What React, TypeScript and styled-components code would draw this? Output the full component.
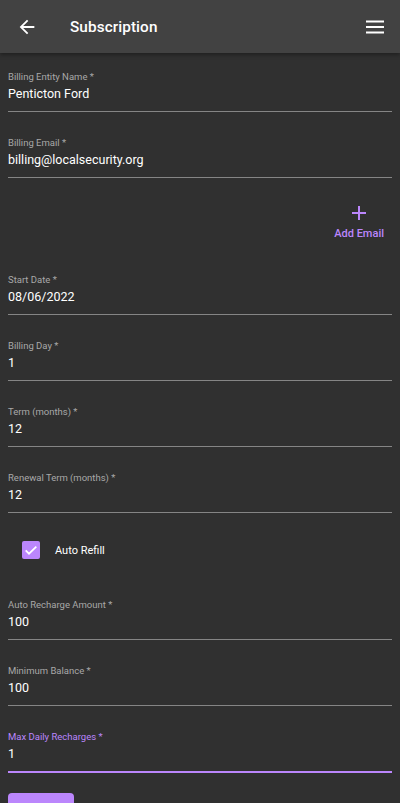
import React from "react";
import styled, { createGlobalStyle } from "styled-components";

const Global = createGlobalStyle`
  html, body { margin: 0; padding: 0; background: #303030; }
  body { font-family: Roboto, "Noto Sans", sans-serif; color: #fff; }
  * { box-sizing: border-box; }
`;

const Page = styled.div`
  width: 400px;
  min-height: 803px;
  background: #303030;
  overflow: hidden;
`;

const TopBar = styled.header`
  height: 53px;
  background: #424242;
  display: flex;
  align-items: center;
  padding: 0 14px 0 16px;
  box-shadow: 0 2px 4px rgba(0, 0, 0, 0.35);
  position: relative;
  z-index: 1;
`;

const IconBtn = styled.button`
  background: none;
  border: none;
  padding: 0;
  width: 22px;
  height: 22px;
  display: flex;
  align-items: center;
  justify-content: center;
  color: #fff;
`;

const Title = styled.h1`
  margin: 0 0 0 32px;
  flex: 1;
  font-size: 15.3px;
  font-weight: 500;
  letter-spacing: 0.1px;
  color: #fff;
`;

const Form = styled.div`
  padding: 17px 8px 0;
  display: flex;
  flex-direction: column;
`;

const Field = styled.div<{ $focused?: boolean; $first?: boolean }>`
  margin-top: ${(p) => (p.$first ? "0" : "24px")};
  padding-bottom: 8px;
  border-bottom: ${(p) => (p.$focused ? "2px solid #bb86fc" : "1px solid #858585")};
  display: flex;
  flex-direction: column;
`;

const Label = styled.label<{ $focused?: boolean }>`
  font-size: 9.5px;
  line-height: 14px;
  color: ${(p) => (p.$focused ? "#bb86fc" : "#a8a8a8")};
`;

const Value = styled.div`
  font-size: 12.5px;
  line-height: 19px;
  color: #fff;
`;

const AddRow = styled.div`
  display: flex;
  justify-content: flex-end;
  padding-top: 15px;
`;

const AddBtn = styled.button`
  background: none;
  border: none;
  padding: 8px;
  display: flex;
  flex-direction: column;
  align-items: center;
  gap: 2px;
  color: #bb86fc;
  font-family: Roboto, sans-serif;
  font-size: 11px;
  font-weight: 500;
  line-height: 14px;
`;

const CheckRow = styled.div`
  display: flex;
  align-items: center;
  height: 42px;
  margin: 16px 0 3px 5px;
`;

const CheckWrap = styled.span`
  width: 36px;
  height: 36px;
  display: flex;
  align-items: center;
  justify-content: center;
`;

const CheckBox = styled.span`
  width: 18px;
  height: 18px;
  border-radius: 2px;
  background: #bb86fc;
  display: flex;
  align-items: center;
  justify-content: center;
`;

const CheckLabel = styled.span`
  margin-left: 6px;
  font-size: 11px;
  color: #fff;
`;

const SaveBtn = styled.button`
  margin-top: 20px;
  width: 66px;
  height: 36px;
  border: none;
  border-radius: 4px;
  background: #bb86fc;
`;

const fields1 = [
  { label: "Billing Entity Name *", value: "Penticton Ford" },
  { label: "Billing Email *", value: "billing@localsecurity.org" },
];
const fields2 = [
  { label: "Start Date *", value: "08/06/2022" },
  { label: "Billing Day *", value: "1" },
  { label: "Term (months) *", value: "12" },
  { label: "Renewal Term (months) *", value: "12" },
];
const fields3 = [
  { label: "Auto Recharge Amount *", value: "100" },
  { label: "Minimum Balance *", value: "100" },
];

export default function App() {
  return (
    <Page>
      <Global />
      <TopBar>
        <IconBtn aria-label="back">
          <svg width="22" height="22" viewBox="0 0 24 24">
            <path d="M20 11H7.83l5.59-5.59L12 4l-8 8 8 8 1.41-1.41L7.83 13H20v-2z" fill="#fff" />
          </svg>
        </IconBtn>
        <Title>Subscription</Title>
        <IconBtn aria-label="menu">
          <svg width="20" height="20" viewBox="0 0 20 20">
            <rect x="1" y="3.5" width="18" height="2" fill="#fff" />
            <rect x="1" y="9" width="18" height="2" fill="#fff" />
            <rect x="1" y="14.5" width="18" height="2" fill="#fff" />
          </svg>
        </IconBtn>
      </TopBar>
      <Form>
        {fields1.map((f, i) => (
          <Field key={f.label} $first={i === 0}>
            <Label>{f.label}</Label>
            <Value>{f.value}</Value>
          </Field>
        ))}
        <AddRow>
          <AddBtn>
            <svg width="24" height="24" viewBox="0 0 24 24">
              <path d="M12 5v14M5 12h14" stroke="#bb86fc" strokeWidth="2" />
            </svg>
            Add Email
          </AddBtn>
        </AddRow>
        {fields2.map((f) => (
          <Field key={f.label}>
            <Label>{f.label}</Label>
            <Value>{f.value}</Value>
          </Field>
        ))}
        <CheckRow>
          <CheckWrap>
            <CheckBox>
              <svg width="16" height="16" viewBox="0 0 24 24">
                <path d="M4 12.5l5 5L20 7" stroke="#fff" strokeWidth="2.6" fill="none" />
              </svg>
            </CheckBox>
          </CheckWrap>
          <CheckLabel>Auto Refill</CheckLabel>
        </CheckRow>
        {fields3.map((f) => (
          <Field key={f.label}>
            <Label>{f.label}</Label>
            <Value>{f.value}</Value>
          </Field>
        ))}
        <Field $focused>
          <Label $focused>Max Daily Recharges *</Label>
          <Value>1</Value>
        </Field>
        <SaveBtn aria-label="save" />
      </Form>
    </Page>
  );
}
